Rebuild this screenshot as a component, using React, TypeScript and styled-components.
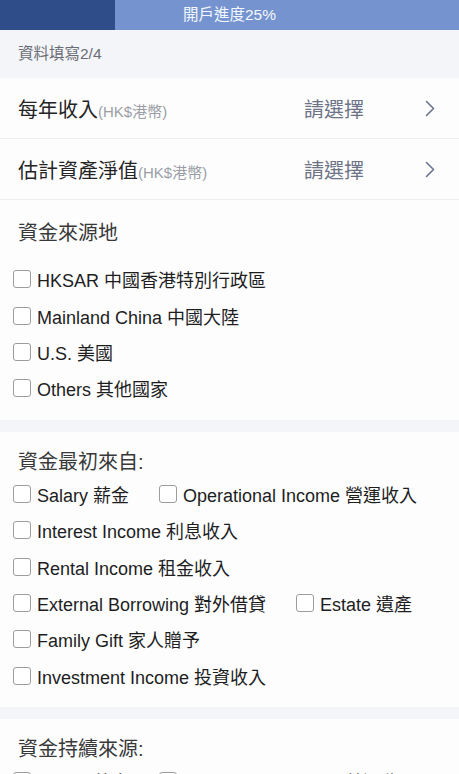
import React from 'react'
import styled, { createGlobalStyle } from 'styled-components'

const GlobalStyle = createGlobalStyle`
  html, body {
    margin: 0;
    padding: 0;
    background: #f4f5f9;
  }
  body {
    font-family: "Liberation Sans", "Noto Sans CJK TC", sans-serif;
    -webkit-font-smoothing: antialiased;
  }
`

const Page = styled.div`
  width: 100%;
  min-height: 774px;
  background: #f4f5f9;
  overflow: hidden;
`

const ProgressBar = styled.div`
  display: grid;
  height: 30px;
  background: #7594cf;
  & > * {
    grid-area: 1 / 1;
  }
`

const ProgressFill = styled.div`
  height: 100%;
  background: #2f4d89;
`

const ProgressText = styled.div`
  align-self: center;
  justify-self: center;
  color: #f4f7fd;
  font-size: 15.5px;
  line-height: 30px;
`

const StepHeader = styled.div`
  height: 48px;
  padding: 0 18px 4px;
  display: flex;
  align-items: center;
  color: #6a6d75;
  font-size: 15.5px;
  box-sizing: border-box;
`

const SelectList = styled.div`
  background: #fdfdfe;
`

const SelectRow = styled.div`
  height: 61px;
  display: flex;
  align-items: center;
  padding: 0 24px 0 18px;
  border-bottom: 1px solid #eeeff3;
  box-sizing: border-box;
`

const RowLabel = styled.div`
  flex: 1;
  font-size: 20px;
  color: #242424;
  white-space: nowrap;
`

const RowUnit = styled.span`
  font-size: 15px;
  color: #9a9da6;
`

const RowValue = styled.div`
  font-size: 20px;
  color: #6c7386;
  margin-right: 61px;
`

const Section = styled.div<{ $gap?: boolean }>`
  margin-top: ${props => (props.$gap ? '12px' : '0')};
  background: #fdfdfe;
  padding: 16px 18px 13px 13px;
`

const SectionTitle = styled.div<{ $spaced?: boolean }>`
  font-size: 20px;
  line-height: 28px;
  color: #383838;
  padding-left: 5px;
  margin-top: ${props => (props.$spaced ? '3px' : '0')};
  margin-bottom: ${props => (props.$spaced ? '14px' : '0')};
`

const CheckRow = styled.div`
  height: 36.4px;
  display: flex;
  align-items: center;
`

const CheckItem = styled.label`
  display: inline-flex;
  align-items: center;
  margin-right: 30px;
  font-size: 18px;
  color: #1e1e1e;
  white-space: nowrap;
  cursor: pointer;
`

const CheckBox = styled.input`
  appearance: none;
  -webkit-appearance: none;
  width: 18px;
  height: 18px;
  margin: 0 6px 0 0;
  border: 1px solid #9d9d9d;
  border-radius: 3px;
  background: #fff;
  box-sizing: border-box;
  flex-shrink: 0;
`

const Chevron = () => (
  <svg width="10" height="17" viewBox="0 0 10 17">
    <polyline points="1.5,1.5 8.5,8.5 1.5,15.5" fill="none" stroke="#6b7590" strokeWidth="1.6" strokeLinecap="round" strokeLinejoin="round" />
  </svg>
)

const origins = [
  ['HKSAR 中國香港特別行政區'],
  ['Mainland China 中國大陸'],
  ['U.S. 美國'],
  ['Others 其他國家'],
]

const sources = [
  ['Salary 薪金', 'Operational Income 營運收入'],
  ['Interest Income 利息收入'],
  ['Rental Income 租金收入'],
  ['External Borrowing 對外借貸', 'Estate 遺產'],
  ['Family Gift 家人贈予'],
  ['Investment Income 投資收入'],
]

const CheckGroup = ({ rows }: { rows: string[][] }) => (
  <>
    {rows.map((row, i) => (
      <CheckRow key={i}>
        {row.map(text => (
          <CheckItem key={text}>
            <CheckBox type="checkbox" />
            {text}
          </CheckItem>
        ))}
      </CheckRow>
    ))}
  </>
)

const App = () => {
  const progress = 25

  return (
    <Page>
      <GlobalStyle />
      <ProgressBar>
        <ProgressFill style={{ width: `${progress}%` }} />
        <ProgressText>開戶進度{progress}%</ProgressText>
      </ProgressBar>

      <StepHeader>資料填寫2/4</StepHeader>

      <SelectList>
        <SelectRow>
          <RowLabel>每年收入<RowUnit>(HK$港幣)</RowUnit></RowLabel>
          <RowValue>請選擇</RowValue>
          <Chevron />
        </SelectRow>
        <SelectRow>
          <RowLabel>估計資產淨值<RowUnit>(HK$港幣)</RowUnit></RowLabel>
          <RowValue>請選擇</RowValue>
          <Chevron />
        </SelectRow>
      </SelectList>

      <Section>
        <SectionTitle $spaced>資金來源地</SectionTitle>
        <CheckGroup rows={origins} />
      </Section>

      <Section $gap>
        <SectionTitle>資金最初來自:</SectionTitle>
        <CheckGroup rows={sources} />
      </Section>

      <Section $gap>
        <SectionTitle>資金持續來源:</SectionTitle>
        <CheckGroup rows={sources} />
      </Section>
    </Page>
  )
}

export default App
